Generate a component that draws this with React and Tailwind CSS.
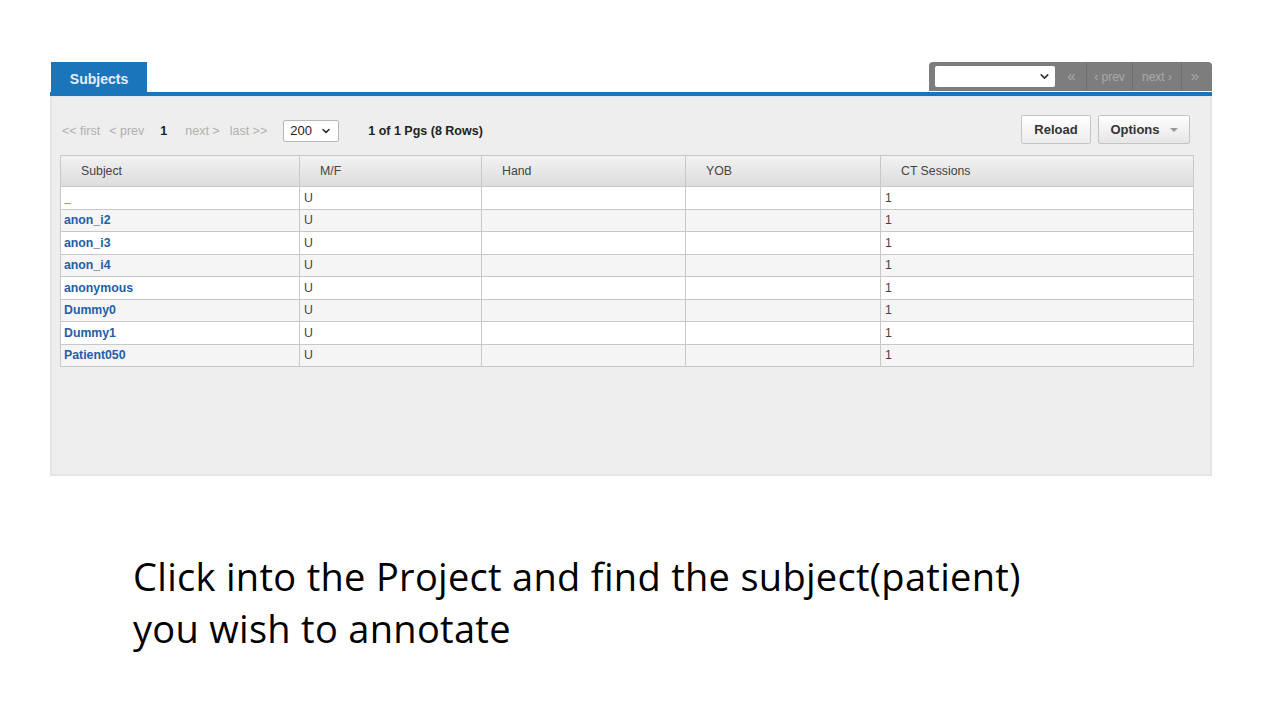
import { FiChevronDown } from "react-icons/fi";

const rows = ["_", "anon_i2", "anon_i3", "anon_i4", "anonymous", "Dummy0", "Dummy1", "Patient050"];

const cols = [
  { label: "Subject", w: "w-[239px]" },
  { label: "M/F", w: "w-[182px]" },
  { label: "Hand", w: "w-[204px]" },
  { label: "YOB", w: "w-[195px]" },
  { label: "CT Sessions", w: "" },
];

function App() {
  return (
    <div className="w-full h-[720px] bg-white pl-[50px] pt-[62px] font-['Liberation_Sans',Arial,sans-serif]">
      {/* Panel */}
      <div className="w-[1162px]">
        {/* Tab bar */}
        <div className="flex items-start justify-between h-[30px]">
          <div className="ml-px w-[96px] h-[30px] bg-[#1b75bb] text-[#e6eef7] text-[14px] font-bold flex items-center justify-center pt-[4px]">
            Subjects
          </div>
          <div className="flex items-center h-[29px] w-[283px] bg-[#7d7d7d] rounded-t-[4px] pl-[6px] pr-[4px] text-[#a9a9a9] text-[12px]">
            <div className="w-[120px] h-[21px] bg-white rounded-[2px] flex items-center justify-end pr-[4px] text-[#333]">
              <FiChevronDown className="w-[13px] h-[13px] stroke-[3]" />
            </div>
            <div className="flex h-[29px] ml-[2px] flex-1">
              <span className="w-[30px] flex items-center justify-center border-r border-[#707070] text-[15px]">«</span>
              <span className="w-[46px] flex items-center justify-center border-r border-[#707070]">‹ prev</span>
              <span className="w-[49px] flex items-center justify-center border-r border-[#707070]">next ›</span>
              <span className="flex-1 flex items-center justify-center text-[15px]">»</span>
            </div>
          </div>
        </div>
        <div className="h-[4px] bg-[#1b75bb]" />
        <div className="h-[380px] bg-[#eeeeee] border-x-2 border-b-2 border-[#e4e4e4] border-t border-t-[#dfe8f2] pl-[8px] pr-[16px]">
          {/* Pager row */}
          <div className="flex items-center justify-between h-[29px] mt-[18px]">
            <div className="flex items-center text-[12.5px] pt-[3px]">
              <span className="ml-[2px] text-[#b0b0b0]">&lt;&lt; first</span>
              <span className="ml-[9px] text-[#b0b0b0]">&lt; prev</span>
              <span className="ml-[16px] font-bold text-[#222]">1</span>
              <span className="ml-[18px] text-[#b0b0b0]">next &gt;</span>
              <span className="ml-[10px] text-[#b0b0b0]">last &gt;&gt;</span>
              <div className="ml-[16px] w-[56px] h-[22px] bg-white border border-[#b8b8b8] rounded-[2px] flex items-center justify-between px-[6px] text-[13px] text-[#222]">
                <span>200</span>
                <FiChevronDown className="w-[12px] h-[12px] stroke-[3]" />
              </div>
              <span className="ml-[29px] font-bold text-[#222]">1 of 1 Pgs (8 Rows)</span>
            </div>
            <div className="flex items-center gap-[7px] mr-[4px] text-[13px] font-bold text-[#333]">
              <button className="w-[70px] h-[29px] bg-gradient-to-b from-white to-[#ececec] border border-[#c4c4c4] rounded-[2px]">
                Reload
              </button>
              <button className="w-[92px] h-[29px] bg-gradient-to-b from-white to-[#e6e6e6] border border-[#c4c4c4] rounded-[2px] flex items-center justify-center gap-[10px]">
                Options
                <span className="w-0 h-0 border-x-[4px] border-x-transparent border-t-[4px] border-t-[#999]" />
              </button>
            </div>
          </div>

          {/* Table */}
          <table className="w-[1134px] border-collapse border border-[#c8c8c8] text-[12.3px] mt-[11px]">
            <thead>
              <tr className="h-[31px] bg-gradient-to-b from-[#f2f2f2] to-[#dcdcdc]">
                {cols.map((c) => (
                  <th key={c.label} className={`${c.w} border border-[#c8c8c8] text-left font-normal text-[#444] pl-[20px]`}>
                    {c.label}
                  </th>
                ))}
              </tr>
            </thead>
            <tbody>
              {rows.map((r, i) => (
                <tr key={r} className={`h-[22.5px] ${i % 2 ? "bg-[#f5f5f5]" : "bg-white"}`}>
                  <td className="border border-[#c8c8c8] pl-[3px] font-bold text-[#1f5ea8]">{r}</td>
                  <td className="border border-[#c8c8c8] pl-[4px] text-[#444]">U</td>
                  <td className="border border-[#c8c8c8]" />
                  <td className="border border-[#c8c8c8]" />
                  <td className="border border-[#c8c8c8] pl-[4px] text-[#444]">1</td>
                </tr>
              ))}
            </tbody>
          </table>
        </div>
      </div>

      {/* Caption */}
      <div className="mt-[74px] ml-[83px] text-[38px] leading-[52px] text-black font-['Open_Sans',sans-serif] tracking-[0.3px]">
        <p>Click into the Project and find the subject(patient)</p>
        <p>you wish to annotate</p>
      </div>
    </div>
  );
}

export default App;
